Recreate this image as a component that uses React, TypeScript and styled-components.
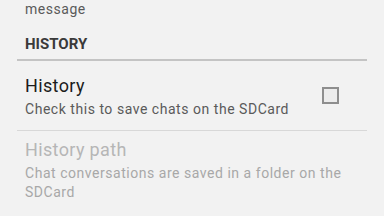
import React from "react";
import styled, { createGlobalStyle } from "styled-components";

const Global = createGlobalStyle`
  html, body { margin: 0; padding: 0; background: #f2f2f2; }
  body { font-family: Roboto, "Noto Sans", sans-serif; overflow: hidden; }
`;

const Screen = styled.div`
  width: 384px;
  height: 216px;
  background: #f2f2f2;
  overflow: hidden;
  padding: 0 17px;
  box-sizing: border-box;
`;

const Summary = styled.div<{ $disabled?: boolean }>`
  font-size: 14px;
  line-height: 19px;
  letter-spacing: 0.038em;
  color: ${(p) => (p.$disabled ? "#a8a8a8" : "#5a5a5a")};
`;

const Carry = styled(Summary)`
  padding-left: 8px;
`;

const Category = styled.div`
  margin-top: 16px;
  padding: 0 8px 5px;
  font-size: 15px;
  line-height: 19px;
  font-weight: 700;
  color: #3a3a3a;
  border-bottom: 2px solid #c4c4c4;
`;

const Item = styled.div<{ $widget?: boolean }>`
  box-sizing: border-box;
  min-height: 70px;
  padding: 6px ${(p) => (p.$widget ? "28px" : "12px")} 6px 8px;
  display: flex;
  align-items: center;
  gap: 16px;
  border-bottom: ${(p) => (p.$widget ? "1px solid #d8d8d8" : "none")};
`;

const Texts = styled.div`
  flex: 1;
  display: flex;
  flex-direction: column;
  gap: 1px;
`;

const Title = styled.div<{ $disabled?: boolean }>`
  font-size: 18px;
  line-height: 26px;
  letter-spacing: 0.02em;
  color: ${(p) => (p.$disabled ? "#b6b6b6" : "#1c1c1c")};
`;

const Check = styled.div`
  width: 17px;
  height: 17px;
  box-sizing: border-box;
  border: 2px solid #8e8e8e;
  background: #ececec;
  flex: none;
`;

export default function App() {
  return (
    <>
      <Global />
      <Screen>
        <Carry>message</Carry>
        <Category>HISTORY</Category>
        <Item $widget>
          <Texts>
            <Title>History</Title>
            <Summary>Check this to save chats on the SDCard</Summary>
          </Texts>
          <Check />
        </Item>
        <Item>
          <Texts>
            <Title $disabled>History path</Title>
            <Summary $disabled>
              Chat conversations are saved in a folder on the SDCard
            </Summary>
          </Texts>
        </Item>
      </Screen>
    </>
  );
}
